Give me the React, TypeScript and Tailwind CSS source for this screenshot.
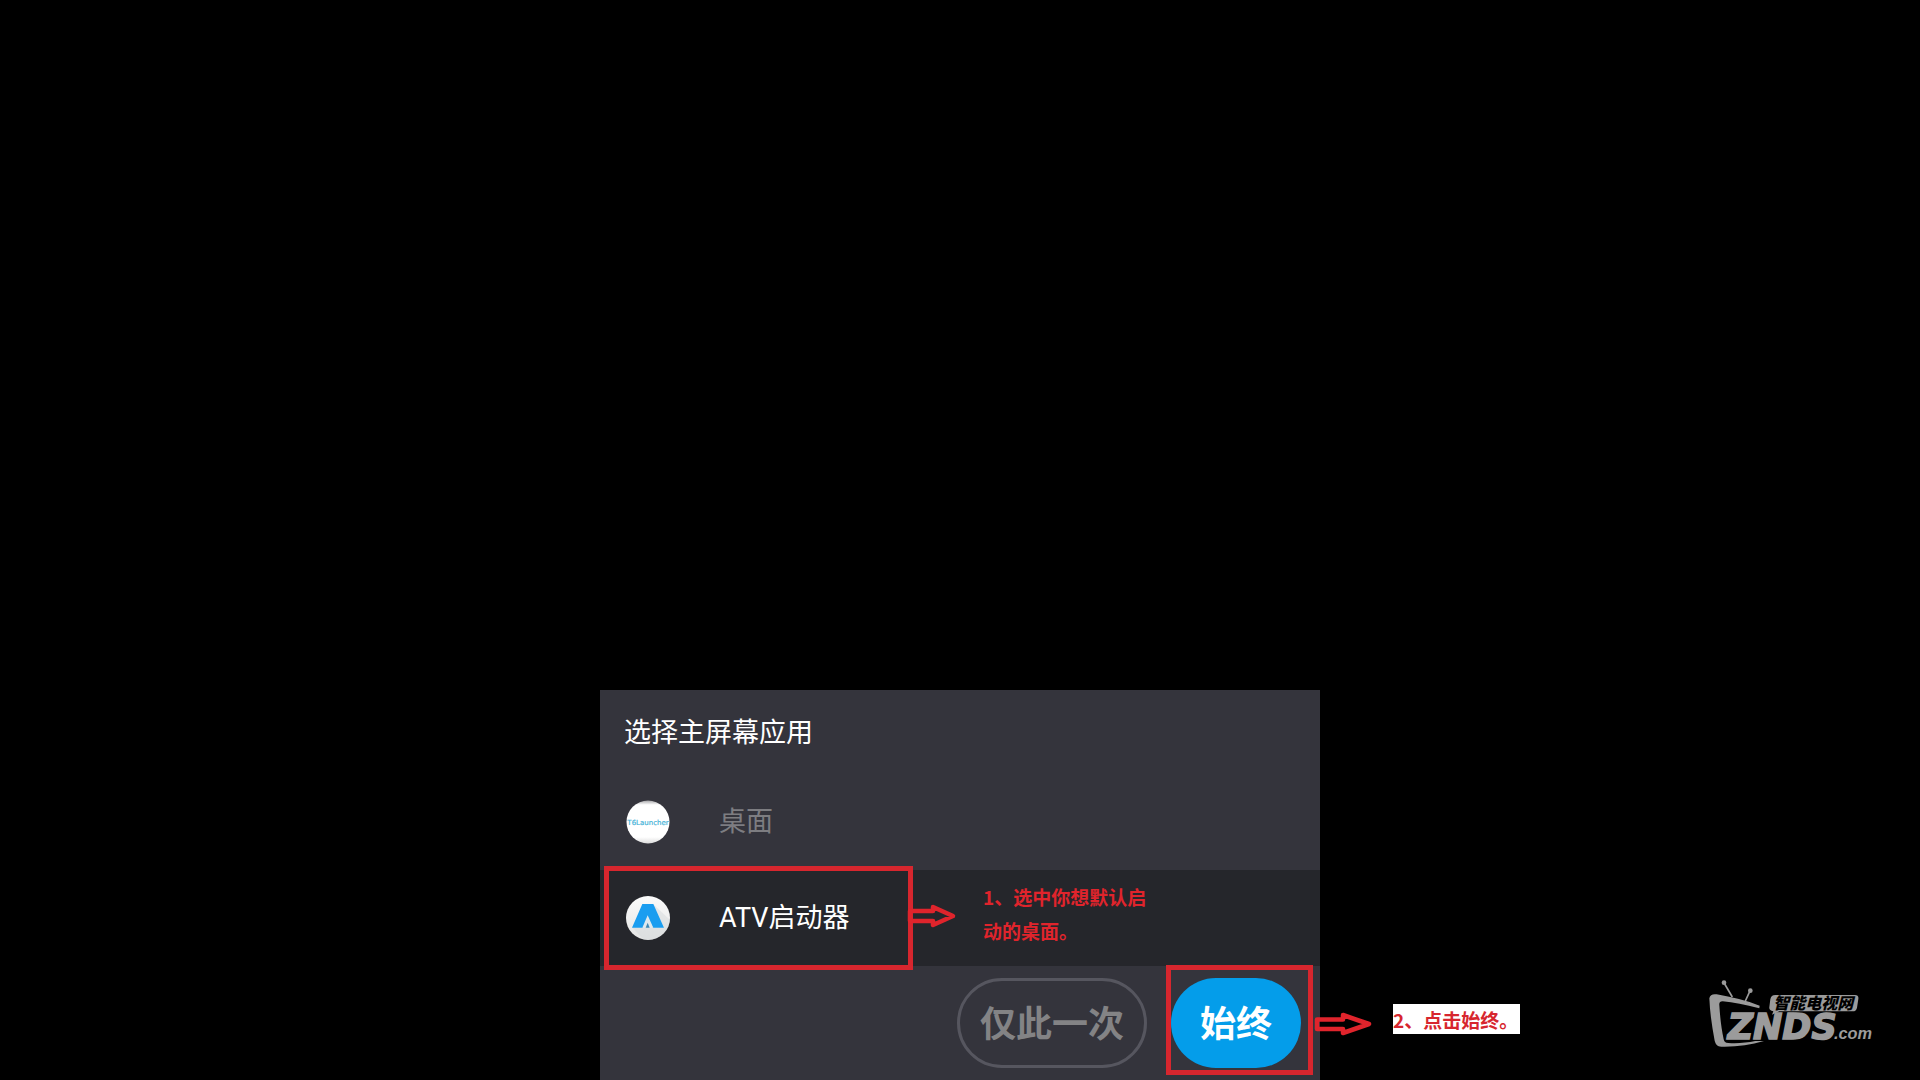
import type { ReactNode } from 'react';

function LauncherIcon() {
  return (
    <svg viewBox="0 0 44 44" className="h-11 w-11" aria-hidden="true">
      <defs>
        <linearGradient id="launcher-rim" x1="0" y1="0" x2="0" y2="1">
          <stop offset="0" stopColor="#a5a5a8" />
          <stop offset="0.1" stopColor="#ffffff" />
          <stop offset="0.85" stopColor="#ffffff" />
          <stop offset="1" stopColor="#dcdcdc" />
        </linearGradient>
        <clipPath id="launcher-clip">
          <circle cx="22" cy="22" r="21" />
        </clipPath>
      </defs>
      <circle cx="22" cy="22" r="21.5" fill="url(#launcher-rim)" />
      <g clipPath="url(#launcher-clip)">
        <text
          x="22"
          y="25"
          textAnchor="middle"
          fontSize="7"
          fill="#45b3d8"
          stroke="#45b3d8"
          strokeWidth="0.2"
          className="font-['DejaVu_Sans',sans-serif]"
        >
          T6Launcher
        </text>
      </g>
    </svg>
  );
}

function AtvIcon() {
  return (
    <svg viewBox="54 54 132 132" className="h-11 w-11" aria-hidden="true">
      <defs>
        <linearGradient id="atv-disc" x1="0" y1="0" x2="0" y2="1">
          <stop offset="0" stopColor="#fbfbfb" />
          <stop offset="1" stopColor="#e4e4e4" />
        </linearGradient>
        <clipPath id="atv-clip">
          <circle cx="120" cy="120" r="66" />
        </clipPath>
      </defs>
      <circle cx="120" cy="120" r="66" fill="url(#atv-disc)" />
      <g clipPath="url(#atv-clip)">
        <path d="M135 78 L190 130 V190 H112 L73 149 H168 Z" fill="#d3d8da" opacity="0.45" />
      </g>
      <path
        d="M103 78 H136 L168 149 H134 L119 117 L105 149 H72 Z"
        fill="#1a9df0"
      />
      <path d="M119 112 L136 149 H103 Z" fill="#dfe9ee" />
      <path d="M119 134 L125 149 H113 Z" fill="#3f88b5" />
    </svg>
  );
}

function ArrowShort() {
  return (
    <svg viewBox="0 0 50 26" className="h-[26px] w-[50px]" fill="none" aria-hidden="true">
      <path d="M3 8 H26 V4 L46 13 L26 22 V18 H3 Z" stroke="#e0242c" strokeWidth="4.500" strokeLinejoin="round" />
    </svg>
  );
}

function ArrowLong() {
  return (
    <svg viewBox="0 0 58 26" className="h-[26px] w-[58px]" fill="none" aria-hidden="true">
      <path d="M3 8.500 H29 V4 L55 13 L29 22 V18 H3 Z" stroke="#e0242c" strokeWidth="4.500" strokeLinejoin="round" />
    </svg>
  );
}

function Watermark() {
  return (
    <svg viewBox="0 0 600 300" className="h-[100px] w-[200px]" role="img" aria-label="ZNDS">
      <g fill="#9b9b9b">
        <circle cx="102" cy="53" r="7" />
        <circle cx="181" cy="77" r="7" />
        <path d="M104 57 L127 96" stroke="#9b9b9b" strokeWidth="5" />
        <path d="M179 80 L166 108" stroke="#9b9b9b" strokeWidth="5" />
        <path d="M58 100 C60 90 68 86 80 88 C125 96 170 107 209 122 L208 130 C165 119 130 112 98 109 C90 109 87 113 88 121 C90 155 94 190 101 223 C103 231 106 234 115 234 C145 236 170 233 196 228 L222 228 C180 240 140 246 94 245 C82 244 77 238 74 227 C66 185 60 145 58 100 Z" />
        <path d="M256 90 H495 Q507 90 505 102 L501 128 Q499 139 488 139 H268 L246 149 L250 139 Q236 137 238 126 L241 103 Q243 90 256 90 Z" />
        <text
          x="113"
          y="222"
          fontSize="105"
          fontWeight="700"
          fontStyle="italic"
          stroke="#9b9b9b"
          strokeWidth="5"
          className="font-['DejaVu_Sans',sans-serif]"
        >
          ZNDS
        </text>
        <text
          x="432"
          y="222"
          fontSize="49"
          fontWeight="700"
          fontStyle="italic"
          className="font-['Liberation_Sans',sans-serif]"
        >
          .com
        </text>
      </g>
      <text
        x="250"
        y="131"
        fontSize="48"
        fontWeight="900"
        fontStyle="italic"
        fill="#000000"
        className="font-['Noto_Sans_CJK_SC',sans-serif]"
      >
        智能电视网
      </text>
    </svg>
  );
}

type AppRowProps = {
  icon: ReactNode;
  label: string;
  selected?: boolean;
};

function AppRow({ icon, label, selected }: AppRowProps) {
  return (
    <button
      type="button"
      aria-pressed={!!selected}
      className={`flex h-24 w-full items-center gap-[49px] px-[26px] text-left text-[27px] ${
        selected ? 'bg-[#25262b] text-white' : 'text-[#7d7d81]'
      }`}
    >
      {icon}
      <span>{label}</span>
    </button>
  );
}

export default function App() {
  return (
    <main className="relative flex min-h-screen flex-col justify-end overflow-hidden bg-black font-[Roboto,'Noto_Sans_CJK_SC',sans-serif]">
      <section className="mx-auto w-full max-w-[720px] bg-[#34343c]">
        <h1 className="px-6 pt-[23px] pb-[21px] text-[27px] leading-10 text-white">选择主屏幕应用</h1>

        <AppRow icon={<LauncherIcon />} label="桌面" />

        <div className="relative">
          <AppRow icon={<AtvIcon />} label="ATV启动器" selected />
          {/* Step 1 */}
          <div className="pointer-events-none absolute -top-1 left-1 h-[104px] w-[309px] border-[5px] border-[#d7262e]" />
          <div className="pointer-events-none absolute top-[33px] left-[307px]">
            <ArrowShort />
          </div>
          <p className="absolute top-[10px] left-[383px] w-[172px] font-['Noto_Sans_CJK_SC',sans-serif] text-[19px] leading-[34px] font-bold text-[#e0242c]">
            1、选中你想默认启动的桌面。
          </p>
        </div>

        <div className="flex justify-end gap-6 py-3 pr-[19px]">
          <button
            type="button"
            className="h-[90px] rounded-full border-3 border-[#56565f] px-5 pt-1 text-[36px] font-bold text-[#838385]"
          >
            仅此一次
          </button>
          <div className="relative">
            <button
              type="button"
              className="h-[90px] rounded-full bg-[#049dea] px-[29px] pt-1 text-[36px] font-bold text-white"
            >
              始终
            </button>
            {/* Step 2 */}
            <div className="pointer-events-none absolute -top-[13px] -left-[5px] h-[110px] w-[147px] border-[5px] border-[#d7262e]" />
            <div className="absolute top-[26px] left-[143px] flex items-start gap-[21px]">
              <div className="pt-[7px]">
                <ArrowLong />
              </div>
              <p className="w-[127px] bg-white pt-0.5 font-['Noto_Sans_CJK_SC',sans-serif] text-[19px] leading-7 font-bold whitespace-nowrap text-[#d7262e]">
                2、点击始终。
              </p>
            </div>
          </div>
        </div>
      </section>

      <div className="absolute right-[30px] bottom-[15px]">
        <Watermark />
      </div>
    </main>
  );
}
